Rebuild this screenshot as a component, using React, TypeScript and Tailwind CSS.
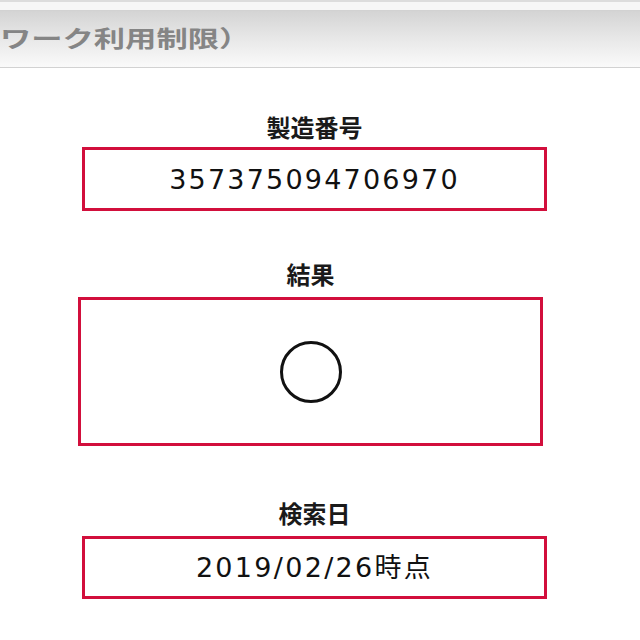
import React from "react";

const jp = "font-['Noto_Sans_CJK_JP',sans-serif]";
const num = "font-['DejaVu_Sans','Noto_Sans_CJK_JP',sans-serif]";

const Field = ({label, children, boxClass}: { label: string; children: React.ReactNode; boxClass: string }) => (
    <div className="flex flex-col">
        <div className={`${jp} text-[24px] font-bold leading-[28px] text-[#1a1a1a] text-center`}>{label}</div>
        <div className={`border-[3px] border-[#d20f3c] bg-white flex items-center justify-center ${boxClass}`}>
            {children}
        </div>
    </div>
);

export default function App() {
    return (
        <div className="w-[640px] h-[640px] bg-white overflow-hidden">
            <div className="border-t-2 border-[#dcdcdc] bg-[#f6f6f6] pt-[8px]">
                <div
                    className="h-[58px] border-t border-b border-[#d2d2d2] bg-gradient-to-b from-[#d4d4d4] via-[#e8e8e8] to-[#fafafa] flex items-center">
                    <div className={`${jp} text-[23px] font-bold text-[#858585] leading-none origin-left scale-x-[1.36] whitespace-nowrap -mt-[3px]`}>
                        ワーク利用制限）
                    </div>
                </div>
            </div>

            <div className="flex flex-col">
                <div className="ml-[82px] w-[465px] mt-[45px]">
                    <Field label="製造番号" boxClass="h-[64px] mt-[6px]">
                        <span className={`${num} text-[27px] tracking-[2.2px] text-[#111] leading-none`}>357375094706970</span>
                    </Field>
                </div>

                <div className="ml-[78px] w-[465px] mt-[49px]">
                    <Field label="結果" boxClass="h-[149px] mt-[9px]">
                        <div className="w-[62px] h-[62px] rounded-full border-[3px] border-[#111]"/>
                    </Field>
                </div>

                <div className="ml-[82px] w-[465px] mt-[53px]">
                    <Field label="検索日" boxClass="h-[63px] mt-[9px]">
                        <span className={`${num} text-[27px] tracking-[2.3px] text-[#111] leading-none`}>2019/02/26時点</span>
                    </Field>
                </div>
            </div>
        </div>
    );
}
